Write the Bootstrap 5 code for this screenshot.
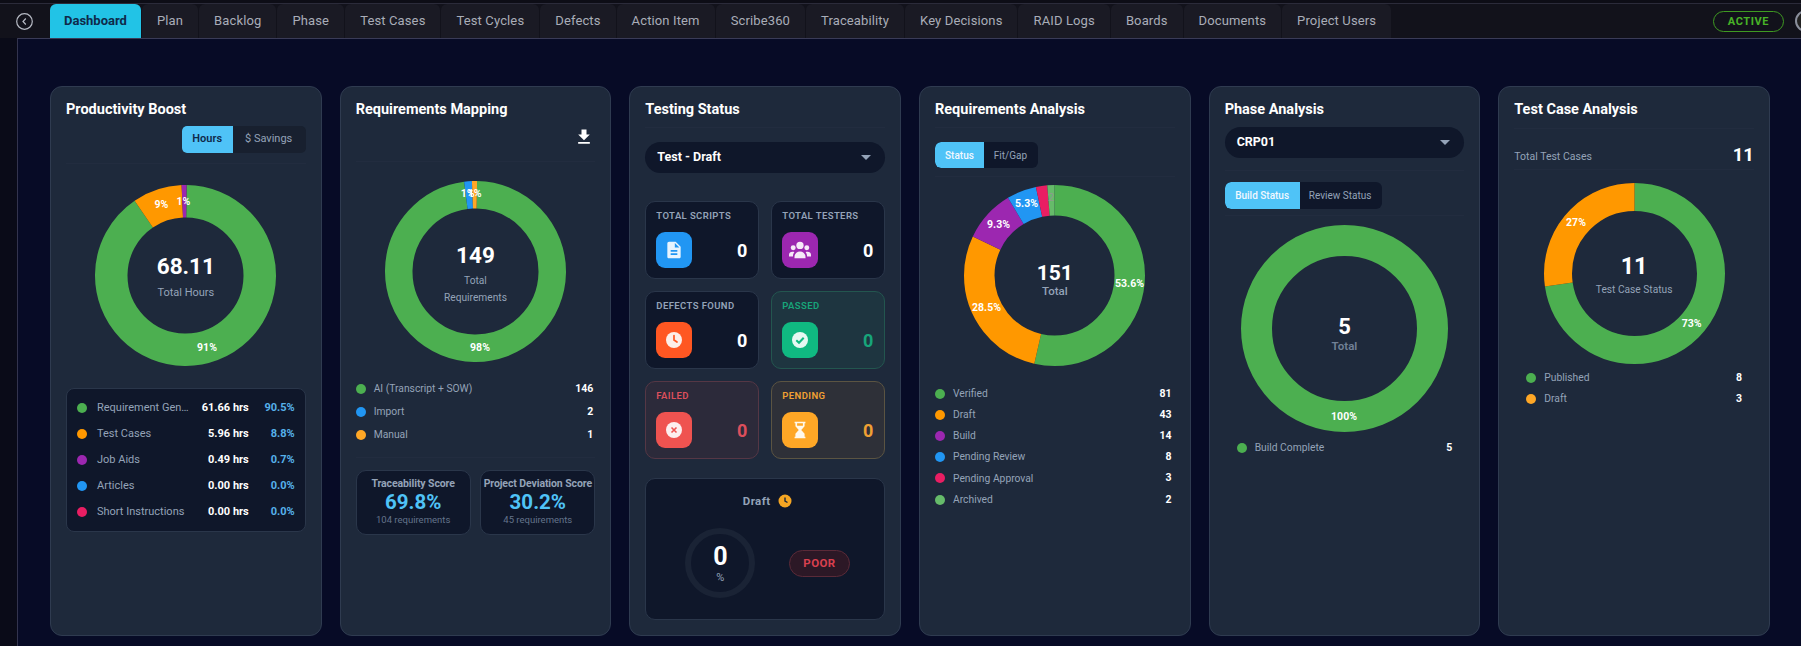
<!doctype html>
<html lang="en"><head><meta charset="utf-8"><title>Dashboard</title>
<link href="https://cdn.jsdelivr.net/npm/bootstrap@5.3.0/dist/css/bootstrap.min.css" rel="stylesheet">
<style>
html,body{height:646px;overflow:hidden}
body{background:#0a0b18;font-family:Roboto,"Liberation Sans",sans-serif;color:#fff}
.topbar{height:38px;padding-top:3px;background:#0d0d16}
.topbar-in{background:#12121b;border-top:1px solid #2b2b3a;height:35px;padding-left:16px;overflow:hidden}
.back{width:17px;height:17px;margin-right:17px;flex:none}
.tab-link{height:34px;padding:0 15px;display:flex;align-items:center;background:#1a1a24;color:#a9adb8;font-size:13px;letter-spacing:.13px;border-radius:6px 6px 0 0;margin-right:1px}
.tab-link.active{background:#22c3e6;color:#0f2a4a;font-weight:700;letter-spacing:0;padding:0 14px}
.status{border:1px solid #3f9a22;color:#48b327;font-size:11px;font-weight:700;letter-spacing:.6px;width:71px;height:21px;padding:0;line-height:19px;background:transparent;margin-right:11px;flex:none}
.avatar{width:22px;height:22px;border:2px solid #8a8f9c;flex:none;background:#222;margin-right:-16px}
.main{height:608px;margin-left:17px;padding:47px 0 0 32px;background:#070b26;border-left:1px solid #33344e;border-top:1px solid #3a3b57;overflow:hidden}
.cols{--bs-gutter-x:18px;--bs-gutter-y:0;width:1738px;margin:0 0 0 -9px}
.cols>*{padding:0 9px}
.dash{background:#1e293b;border:1px solid #2f3b50;border-radius:12px;height:550px;padding:13px 15px;color:#fff}
.ttl{font-size:14.5px;font-weight:700;line-height:20px;margin:0 0 -2px;color:#fff}
.hr{border-bottom:1px solid #222c3f;height:0}
.g3{margin-top:3px}.g5{margin-top:5px}.g6{margin-top:6px}.g8{margin-top:8px}.g9{margin-top:9px}.g10{margin-top:10px}.g11{margin-top:11px}.g12{margin-top:12px}.g13{margin-top:13px}.g14{margin-top:14px}.g15{margin-top:15px}.g17{margin-top:17px}.g19{margin-top:19px}.g21{margin-top:21px}.g22{margin-top:22px}.g28{margin-top:28px}
.tg{background:#18202f;border-radius:5px;height:27px;overflow:hidden}
.tg .btn{border:0;border-radius:0;padding:0;font-size:11px;color:#94a3b8;height:100%}
.tg .btn.on{background:#4fc3f7;font-weight:600;color:#0f2a4a;border-radius:4px}
.tg.sm{background:#0f172a;border-radius:6px}
.tg.sm .btn{font-size:10px}
.tg.sm .btn.on{color:#f1f8ff;border-radius:6px 0 0 6px;font-weight:500}
.h26{height:26px}
.w51{width:51px}.w73{width:74px}.w49{width:49px}.w55{width:55px}.w75{width:75px}.w83{width:83px}
.donut{position:relative;margin-left:auto;margin-right:auto;width:181px;height:181px}
.donut.lg{width:207px;height:207px}
.donut svg{display:block;width:100%;height:100%}
.donut text{font-family:Roboto,"Liberation Sans",sans-serif;font-size:10.5px;font-weight:700;fill:#fff;text-anchor:middle;dominant-baseline:central}
.donut text.dim{fill:#8d9a8f;font-weight:400;font-size:11px}
.center{position:absolute;inset:0;display:flex;flex-direction:column;align-items:center;justify-content:center;text-align:center}
.center.p2{padding-top:2px}.center.p4{padding-top:4px}.center.p7{padding-top:7px}.center.p8{padding-top:8px}.center.p1{padding-top:1px}
.big{font-size:22.5px;font-weight:700;line-height:28px}
.big.b21{font-size:21px}.big.b23{font-size:23.5px}
.big.x{font-size:22px;line-height:30px}
.sub{font-size:11px;color:#94a3b8;line-height:16px}
.sub.t2{line-height:16.5px;font-size:10.2px;margin-top:4px}
.sub.t6{font-size:10.2px;margin-top:2px}
.sub.mut{color:#718096;font-weight:600;margin-top:-4px;font-size:11.5px}
.sub.strong{font-weight:500;margin-top:-4px;font-size:11.5px}
.panel{background:#0f172a;border:1px solid #2a364a;border-radius:8px;padding:6px 10px}
.lrow{height:26px}
.dot{width:10px;height:10px;flex:none}
.lab{font-size:11px;color:#94a3b8}
.lrow .lab{width:92px;margin-left:10px;white-space:nowrap}
.hrs{width:60px;font-size:11px;font-weight:700;text-align:right}
.pct{width:46px;font-size:11px;font-weight:700;text-align:right;color:#56b1ea}
.lg-row{height:23px;padding-right:2px}
.lg-row.t{height:21.2px;padding-right:3px}
.lg-row.p{height:21px;padding:0 12px}
.lg-row .lab{margin-left:8px;font-size:10.3px}
.lg-row .val{margin-left:auto;font-size:10.5px;font-weight:700}
.score{width:115px;height:65px;background:#0f172a;border:1px solid #2a364a;border-radius:10px;text-align:center;padding-top:6px;flex:none}
.score h6{font-size:10.5px;font-weight:700;color:#94a3b8;margin:0;line-height:14px;white-space:nowrap;letter-spacing:-.1px}
.score b{display:block;font-size:20.5px;line-height:22px;color:#4fc3f7;font-weight:700}
.score small{display:block;font-size:9.5px;line-height:14px;color:#64748b}
.sel{background:#0f172a!important;color:#fff!important;border:0;border-radius:16px;height:31px;padding:0 12px;font-size:12.5px;font-weight:700}
.sel::after{border-top:5px solid #94a3b8;border-left:5px solid transparent;border-right:5px solid transparent;border-bottom:0;margin-right:2px}
.grid2{display:grid;grid-template-columns:114px 114px;gap:12px}
.stat{height:78px;background:#0f172a;border:1px solid #2a364a;border-radius:10px;padding:8px 11px 8px 10px}
.stat .nm{font-size:9.5px;font-weight:600;line-height:12px;color:#94a3b8;letter-spacing:.4px;text-transform:uppercase}
.stat .ic{width:36px;height:36px;border-radius:9px;flex:none;display:flex;align-items:center;justify-content:center}
.stat .num{font-size:18px;font-weight:700}
.stat.pass{background:#1e3540;border-color:#23564f}.pass .nm,.pass .num{color:#17a57a}
.stat.fail{background:#2c2a3a;border-color:#553745}.fail .nm,.fail .num{color:#dc4f5c}
.stat.pend{background:#2e3038;border-color:#5b5442}.pend .nm,.pend .num{color:#f0a033}
.b-blue{background:#2196f3}.b-pur{background:#9c27b0}.b-org{background:#ff5722}.b-grn{background:#10b981}.b-red{background:#ef5350}.b-amb{background:#ffa726}
.c-g{background:#4caf50}.c-o{background:#ff9800}.c-p{background:#9c27b0}.c-b{background:#2196f3}.c-r{background:#e91e63}.c-l{background:#66bb6a}.c-a{background:#ffa726}
.draft{height:142px;background:#0f172a;border:1px solid #2a364a;border-radius:10px;padding:14px 34px 0 39px}
.draft .h{font-size:11.5px;font-weight:700;color:#94a3b8;line-height:16px;letter-spacing:.4px}
.ring{width:70px;height:70px;border:6px solid #1a2335;line-height:1}
.ring b{font-size:25px;line-height:25px}
.ring span{font-size:11px;color:#94a3b8;margin-top:3px}
.poor{width:61px;height:27px;background:#2c1826;border:1px solid #5a2a38;color:#d9404f;font-size:11.5px;font-weight:700;letter-spacing:.4px;line-height:25px;padding:0}
.tot{font-size:10.5px;color:#94a3b8;height:29px;margin-top:11px}
.tot span{padding-top:5px}
.tot b{font-size:18.5px;color:#fff;line-height:24px}
.dl{width:20px;height:20px;margin-right:1px}
</style></head><body>
<header class="topbar">
<div class="topbar-in d-flex align-items-center">
<svg class="back" viewBox="0 0 17 17" fill="none" stroke="#b6bac4" stroke-width="1.2"><circle cx="8.5" cy="8.5" r="7.8"/><path d="M9.8 5.5 7 8.5l2.8 3"/></svg>
<ul class="nav flex-nowrap align-self-end">
<li class="nav-item"><a class="nav-link tab-link active" href="#">Dashboard</a></li>
<li class="nav-item"><a class="nav-link tab-link" href="#">Plan</a></li>
<li class="nav-item"><a class="nav-link tab-link" href="#">Backlog</a></li>
<li class="nav-item"><a class="nav-link tab-link" href="#">Phase</a></li>
<li class="nav-item"><a class="nav-link tab-link" href="#">Test Cases</a></li>
<li class="nav-item"><a class="nav-link tab-link" href="#">Test Cycles</a></li>
<li class="nav-item"><a class="nav-link tab-link" href="#">Defects</a></li>
<li class="nav-item"><a class="nav-link tab-link" href="#">Action Item</a></li>
<li class="nav-item"><a class="nav-link tab-link" href="#">Scribe360</a></li>
<li class="nav-item"><a class="nav-link tab-link" href="#">Traceability</a></li>
<li class="nav-item"><a class="nav-link tab-link" href="#">Key Decisions</a></li>
<li class="nav-item"><a class="nav-link tab-link" href="#">RAID Logs</a></li>
<li class="nav-item"><a class="nav-link tab-link" href="#">Boards</a></li>
<li class="nav-item"><a class="nav-link tab-link" href="#">Documents</a></li>
<li class="nav-item"><a class="nav-link tab-link" href="#">Project Users</a></li>
</ul>
<span class="badge rounded-pill status ms-auto">ACTIVE</span>
<span class="avatar rounded-circle"></span>
</div>
</header>
<main class="main">
<div class="row row-cols-6 cols flex-nowrap">

<div class="col"><div class="card dash">
<h5 class="ttl">Productivity Boost</h5>
<div class="d-flex justify-content-end g8"><div class="btn-group tg"><button class="btn on w51">Hours</button><button class="btn w73">$ Savings</button></div></div>
<div class="hr g10"></div>
<div class="donut g21"><svg viewBox="0 0 181 181" fill="none" stroke-width="32.5">
<g transform="rotate(-89.3 90.5 90.5)">
<circle cx="90.5" cy="90.5" r="74.25" pathLength="100" stroke="#4caf50" stroke-dasharray="90.3 100"/>
<circle cx="90.5" cy="90.5" r="74.25" pathLength="100" stroke="#ff9800" stroke-dasharray="8.8 100" stroke-dashoffset="-90.3"/>
<circle cx="90.5" cy="90.5" r="74.25" pathLength="100" stroke="#9c27b0" stroke-dasharray="0.9 100" stroke-dashoffset="-99.1"/>
</g>
<text x="112" y="162">91%</text><text x="66.5" y="19">9%</text><text x="88.5" y="16">1%</text></svg>
<div class="center p1"><div class="big">68.11</div><div class="sub g5">Total Hours</div></div></div>
<div class="panel g22">
<div class="lrow d-flex align-items-center"><span class="dot rounded-circle c-g"></span><span class="lab">Requirement Gen…</span><span class="hrs">61.66 hrs</span><span class="pct">90.5%</span></div>
<div class="lrow d-flex align-items-center"><span class="dot rounded-circle c-o"></span><span class="lab">Test Cases</span><span class="hrs">5.96 hrs</span><span class="pct">8.8%</span></div>
<div class="lrow d-flex align-items-center"><span class="dot rounded-circle c-p"></span><span class="lab">Job Aids</span><span class="hrs">0.49 hrs</span><span class="pct">0.7%</span></div>
<div class="lrow d-flex align-items-center"><span class="dot rounded-circle c-b"></span><span class="lab">Articles</span><span class="hrs">0.00 hrs</span><span class="pct">0.0%</span></div>
<div class="lrow d-flex align-items-center"><span class="dot rounded-circle c-r"></span><span class="lab">Short Instructions</span><span class="hrs">0.00 hrs</span><span class="pct">0.0%</span></div>
</div>
</div></div>

<div class="col"><div class="card dash">
<h5 class="ttl">Requirements Mapping</h5>
<div class="d-flex justify-content-end g9"><svg class="dl" viewBox="0 0 24 24" fill="#fff"><path d="M5 20h14v-2H5v2zM19 9h-4V3H9v6H5l7 7 7-7z"/></svg></div>
<div class="hr g14"></div>
<div class="donut g19"><svg viewBox="0 0 181 181" fill="none" stroke-width="27.5">
<g transform="rotate(-89 90.5 90.5)">
<circle cx="90.5" cy="90.5" r="76.75" pathLength="100" stroke="#4caf50" stroke-dasharray="97.7 100"/>
<circle cx="90.5" cy="90.5" r="76.75" pathLength="100" stroke="#2196f3" stroke-dasharray="1.37 100" stroke-dashoffset="-97.7"/>
<circle cx="90.5" cy="90.5" r="76.75" pathLength="100" stroke="#ffa726" stroke-dasharray="0.93 100" stroke-dashoffset="-99.07"/>
</g>
<text x="82.7" y="12">1%</text><text x="89.7" y="12">1%</text><text x="95" y="166">98%</text></svg>
<div class="center p4"><div class="big">149</div><div class="sub t2">Total<br>Requirements</div></div></div>
<div class="g15">
<div class="lg-row d-flex align-items-center"><span class="dot rounded-circle c-g"></span><span class="lab">AI (Transcript + SOW)</span><span class="val">146</span></div>
<div class="lg-row d-flex align-items-center"><span class="dot rounded-circle c-b"></span><span class="lab">Import</span><span class="val">2</span></div>
<div class="lg-row d-flex align-items-center"><span class="dot rounded-circle c-a"></span><span class="lab">Manual</span><span class="val">1</span></div>
</div>
<div class="hr g11"></div>
<div class="d-flex justify-content-between g12">
<div class="score"><h6>Traceability Score</h6><b>69.8%</b><small>104 requirements</small></div>
<div class="score"><h6>Project Deviation Score</h6><b>30.2%</b><small>45 requirements</small></div>
</div>
</div></div>

<div class="col"><div class="card dash">
<h5 class="ttl">Testing Status</h5>
<div class="hr g9"></div>
<button class="btn sel dropdown-toggle d-flex justify-content-between align-items-center w-100 g14" type="button">Test - Draft</button>
<div class="grid2 g28">
<div class="stat"><div class="nm">Total Scripts</div><div class="d-flex justify-content-between align-items-center g10"><span class="ic b-blue"><svg width="20" height="20" viewBox="0 0 24 24" fill="#e8f4fe"><path d="M14 2H6c-1.1 0-1.99.9-1.99 2L4 20c0 1.1.89 2 1.99 2H18c1.1 0 2-.9 2-2V8l-6-6zm2 16H8v-2h8v2zm0-4H8v-2h8v2zm-3-5V3.5L18.5 9H13z"/></svg></span><span class="num">0</span></div></div>
<div class="stat"><div class="nm">Total Testers</div><div class="d-flex justify-content-between align-items-center g10"><span class="ic b-pur"><svg width="22" height="20" viewBox="0 0 24 21" fill="#f6e9f8"><circle cx="12" cy="5.5" r="4"/><circle cx="4.6" cy="8" r="2.7"/><circle cx="19.4" cy="8" r="2.7"/><path d="M6 19.5V18c0-3.4 2.7-6 6-6s6 2.6 6 6v1.5zM0 17.5v-1.7c0-2 1.6-3.3 3.8-3.3.8 0 1.5.1 2.1.4C4.8 14 4.3 15.5 4.3 17.5zM24 17.5v-1.7c0-2-1.6-3.3-3.8-3.3-.8 0-1.5.1-2.1.4 1.1 1.1 1.6 2.6 1.6 4.6z"/></svg></span><span class="num">0</span></div></div>
<div class="stat"><div class="nm">Defects Found</div><div class="d-flex justify-content-between align-items-center g10"><span class="ic b-org"><svg width="18" height="18" viewBox="0 0 18 18"><circle cx="9" cy="9" r="8" fill="#fdeee8"/><path d="M9 4.5V9l3 2" fill="none" stroke="#ff5722" stroke-width="1.7" stroke-linecap="round"/></svg></span><span class="num">0</span></div></div>
<div class="stat pass"><div class="nm">Passed</div><div class="d-flex justify-content-between align-items-center g10"><span class="ic b-grn"><svg width="18" height="18" viewBox="0 0 18 18"><circle cx="9" cy="9" r="8" fill="#e6f8f2"/><path d="M5.3 9.2 8 11.8l4.7-5" fill="none" stroke="#10b981" stroke-width="2"/></svg></span><span class="num">0</span></div></div>
<div class="stat fail"><div class="nm">Failed</div><div class="d-flex justify-content-between align-items-center g10"><span class="ic b-red"><svg width="18" height="18" viewBox="0 0 18 18"><circle cx="9" cy="9" r="8" fill="#fdeeee"/><path d="m6.5 6.5 5 5m0-5-5 5" fill="none" stroke="#ef5350" stroke-width="1.6"/></svg></span><span class="num">0</span></div></div>
<div class="stat pend"><div class="nm">Pending</div><div class="d-flex justify-content-between align-items-center g10"><span class="ic b-amb"><svg width="20" height="20" viewBox="0 0 24 24" fill="#fff8ec"><path d="M5.5 2h13v2h-1v3.5L13.5 12l4 4.5V20h1v2h-13v-2h1v-3.5l4-4.5-4-4.5V4h-1V2zm3 2v3h7V4h-7z"/></svg></span><span class="num">0</span></div></div>
</div>
<div class="draft g19">
<div class="d-flex justify-content-center align-items-center gap-2"><span class="h">Draft</span><svg width="14" height="14" viewBox="0 0 14 14"><circle cx="7" cy="7" r="6.5" fill="#f5a623"/><path d="M7 3.5V7l2.5 1.5" fill="none" stroke="#1e293b" stroke-width="1.4"/></svg></div>
<div class="d-flex justify-content-between align-items-center g19">
<div class="ring rounded-circle d-flex flex-column align-items-center justify-content-center"><b>0</b><span>%</span></div>
<span class="badge rounded-pill poor">POOR</span>
</div>
</div>
</div></div>

<div class="col"><div class="card dash">
<h5 class="ttl">Requirements Analysis</h5>
<div class="hr g9"></div>
<div class="d-flex g14"><div class="btn-group tg sm h26"><button class="btn on w49">Status</button><button class="btn w55">Fit/Gap</button></div></div>
<div class="hr g8"></div>
<div class="donut g8"><svg viewBox="0 0 181 181" fill="none" stroke-width="30.5">
<g transform="rotate(-90 90.5 90.5)">
<circle cx="90.5" cy="90.5" r="75.25" pathLength="100" stroke="#4caf50" stroke-dasharray="53.6 100"/>
<circle cx="90.5" cy="90.5" r="75.25" pathLength="100" stroke="#ff9800" stroke-dasharray="28.5 100" stroke-dashoffset="-53.6"/>
<circle cx="90.5" cy="90.5" r="75.25" pathLength="100" stroke="#9c27b0" stroke-dasharray="9.3 100" stroke-dashoffset="-82.1"/>
<circle cx="90.5" cy="90.5" r="75.25" pathLength="100" stroke="#2196f3" stroke-dasharray="5.3 100" stroke-dashoffset="-91.4"/>
<circle cx="90.5" cy="90.5" r="75.25" pathLength="100" stroke="#e91e63" stroke-dasharray="2 100" stroke-dashoffset="-96.7"/>
<circle cx="90.5" cy="90.5" r="75.25" pathLength="100" stroke="#66bb6a" stroke-dasharray="1.3 100" stroke-dashoffset="-98.7"/>
</g>
<text x="165.5" y="98">53.6%</text><text x="22.5" y="122.7">28.5%</text><text x="34.5" y="39">9.3%</text><text x="62.5" y="18.7">5.3%</text><text class="dim" x="87" y="12">2</text></svg>
<div class="center p7"><div class="big b21">151</div><div class="sub strong">Total</div></div></div>
<div class="g17">
<div class="lg-row t d-flex align-items-center"><span class="dot rounded-circle c-g"></span><span class="lab">Verified</span><span class="val">81</span></div>
<div class="lg-row t d-flex align-items-center"><span class="dot rounded-circle c-o"></span><span class="lab">Draft</span><span class="val">43</span></div>
<div class="lg-row t d-flex align-items-center"><span class="dot rounded-circle c-p"></span><span class="lab">Build</span><span class="val">14</span></div>
<div class="lg-row t d-flex align-items-center"><span class="dot rounded-circle c-b"></span><span class="lab">Pending Review</span><span class="val">8</span></div>
<div class="lg-row t d-flex align-items-center"><span class="dot rounded-circle c-r"></span><span class="lab">Pending Approval</span><span class="val">3</span></div>
<div class="lg-row t d-flex align-items-center"><span class="dot rounded-circle c-l"></span><span class="lab">Archived</span><span class="val">2</span></div>
</div>
</div></div>

<div class="col"><div class="card dash">
<h5 class="ttl">Phase Analysis</h5>
<button class="btn sel dropdown-toggle d-flex justify-content-between align-items-center w-100 g9" type="button">CRP01</button>
<div class="hr g12"></div>
<div class="d-flex g11"><div class="btn-group tg sm"><button class="btn on w75">Build Status</button><button class="btn w83">Review Status</button></div></div>
<div class="hr g6"></div>
<div class="donut lg g9"><svg viewBox="0 0 207 207" fill="none" stroke-width="31">
<circle cx="103.5" cy="103.5" r="88" stroke="#4caf50"/>
<text x="103" y="191.7">100%</text></svg>
<div class="center p8"><div class="big x">5</div><div class="sub mut">Total</div></div></div>
<div class="g5">
<div class="lg-row p d-flex align-items-center"><span class="dot rounded-circle c-g"></span><span class="lab">Build Complete</span><span class="val">5</span></div>
</div>
</div></div>

<div class="col"><div class="card dash">
<h5 class="ttl">Test Case Analysis</h5>
<div class="hr g10"></div>
<div class="tot d-flex justify-content-between align-items-center"><span>Total Test Cases</span><b>11</b></div>
<div class="hr"></div>
<div class="donut g13"><svg viewBox="0 0 181 181" fill="none" stroke-width="28">
<g transform="rotate(-90 90.5 90.5)">
<circle cx="90.5" cy="90.5" r="76.5" pathLength="100" stroke="#4caf50" stroke-dasharray="72.7 100"/>
<circle cx="90.5" cy="90.5" r="76.5" pathLength="100" stroke="#ff9800" stroke-dasharray="27.3 100" stroke-dashoffset="-72.7"/>
</g>
<text x="32" y="39.7">27%</text><text x="147.7" y="140">73%</text></svg>
<div class="center p2"><div class="big b23">11</div><div class="sub t6">Test Case Status</div></div></div>
<div class="g3">
<div class="lg-row p d-flex align-items-center"><span class="dot rounded-circle c-g"></span><span class="lab">Published</span><span class="val">8</span></div>
<div class="lg-row p d-flex align-items-center"><span class="dot rounded-circle c-a"></span><span class="lab">Draft</span><span class="val">3</span></div>
</div>
</div></div>

</div>
</main>
<script src="https://cdn.jsdelivr.net/npm/bootstrap@5.3.0/dist/js/bootstrap.bundle.min.js"></script>
</body></html>
